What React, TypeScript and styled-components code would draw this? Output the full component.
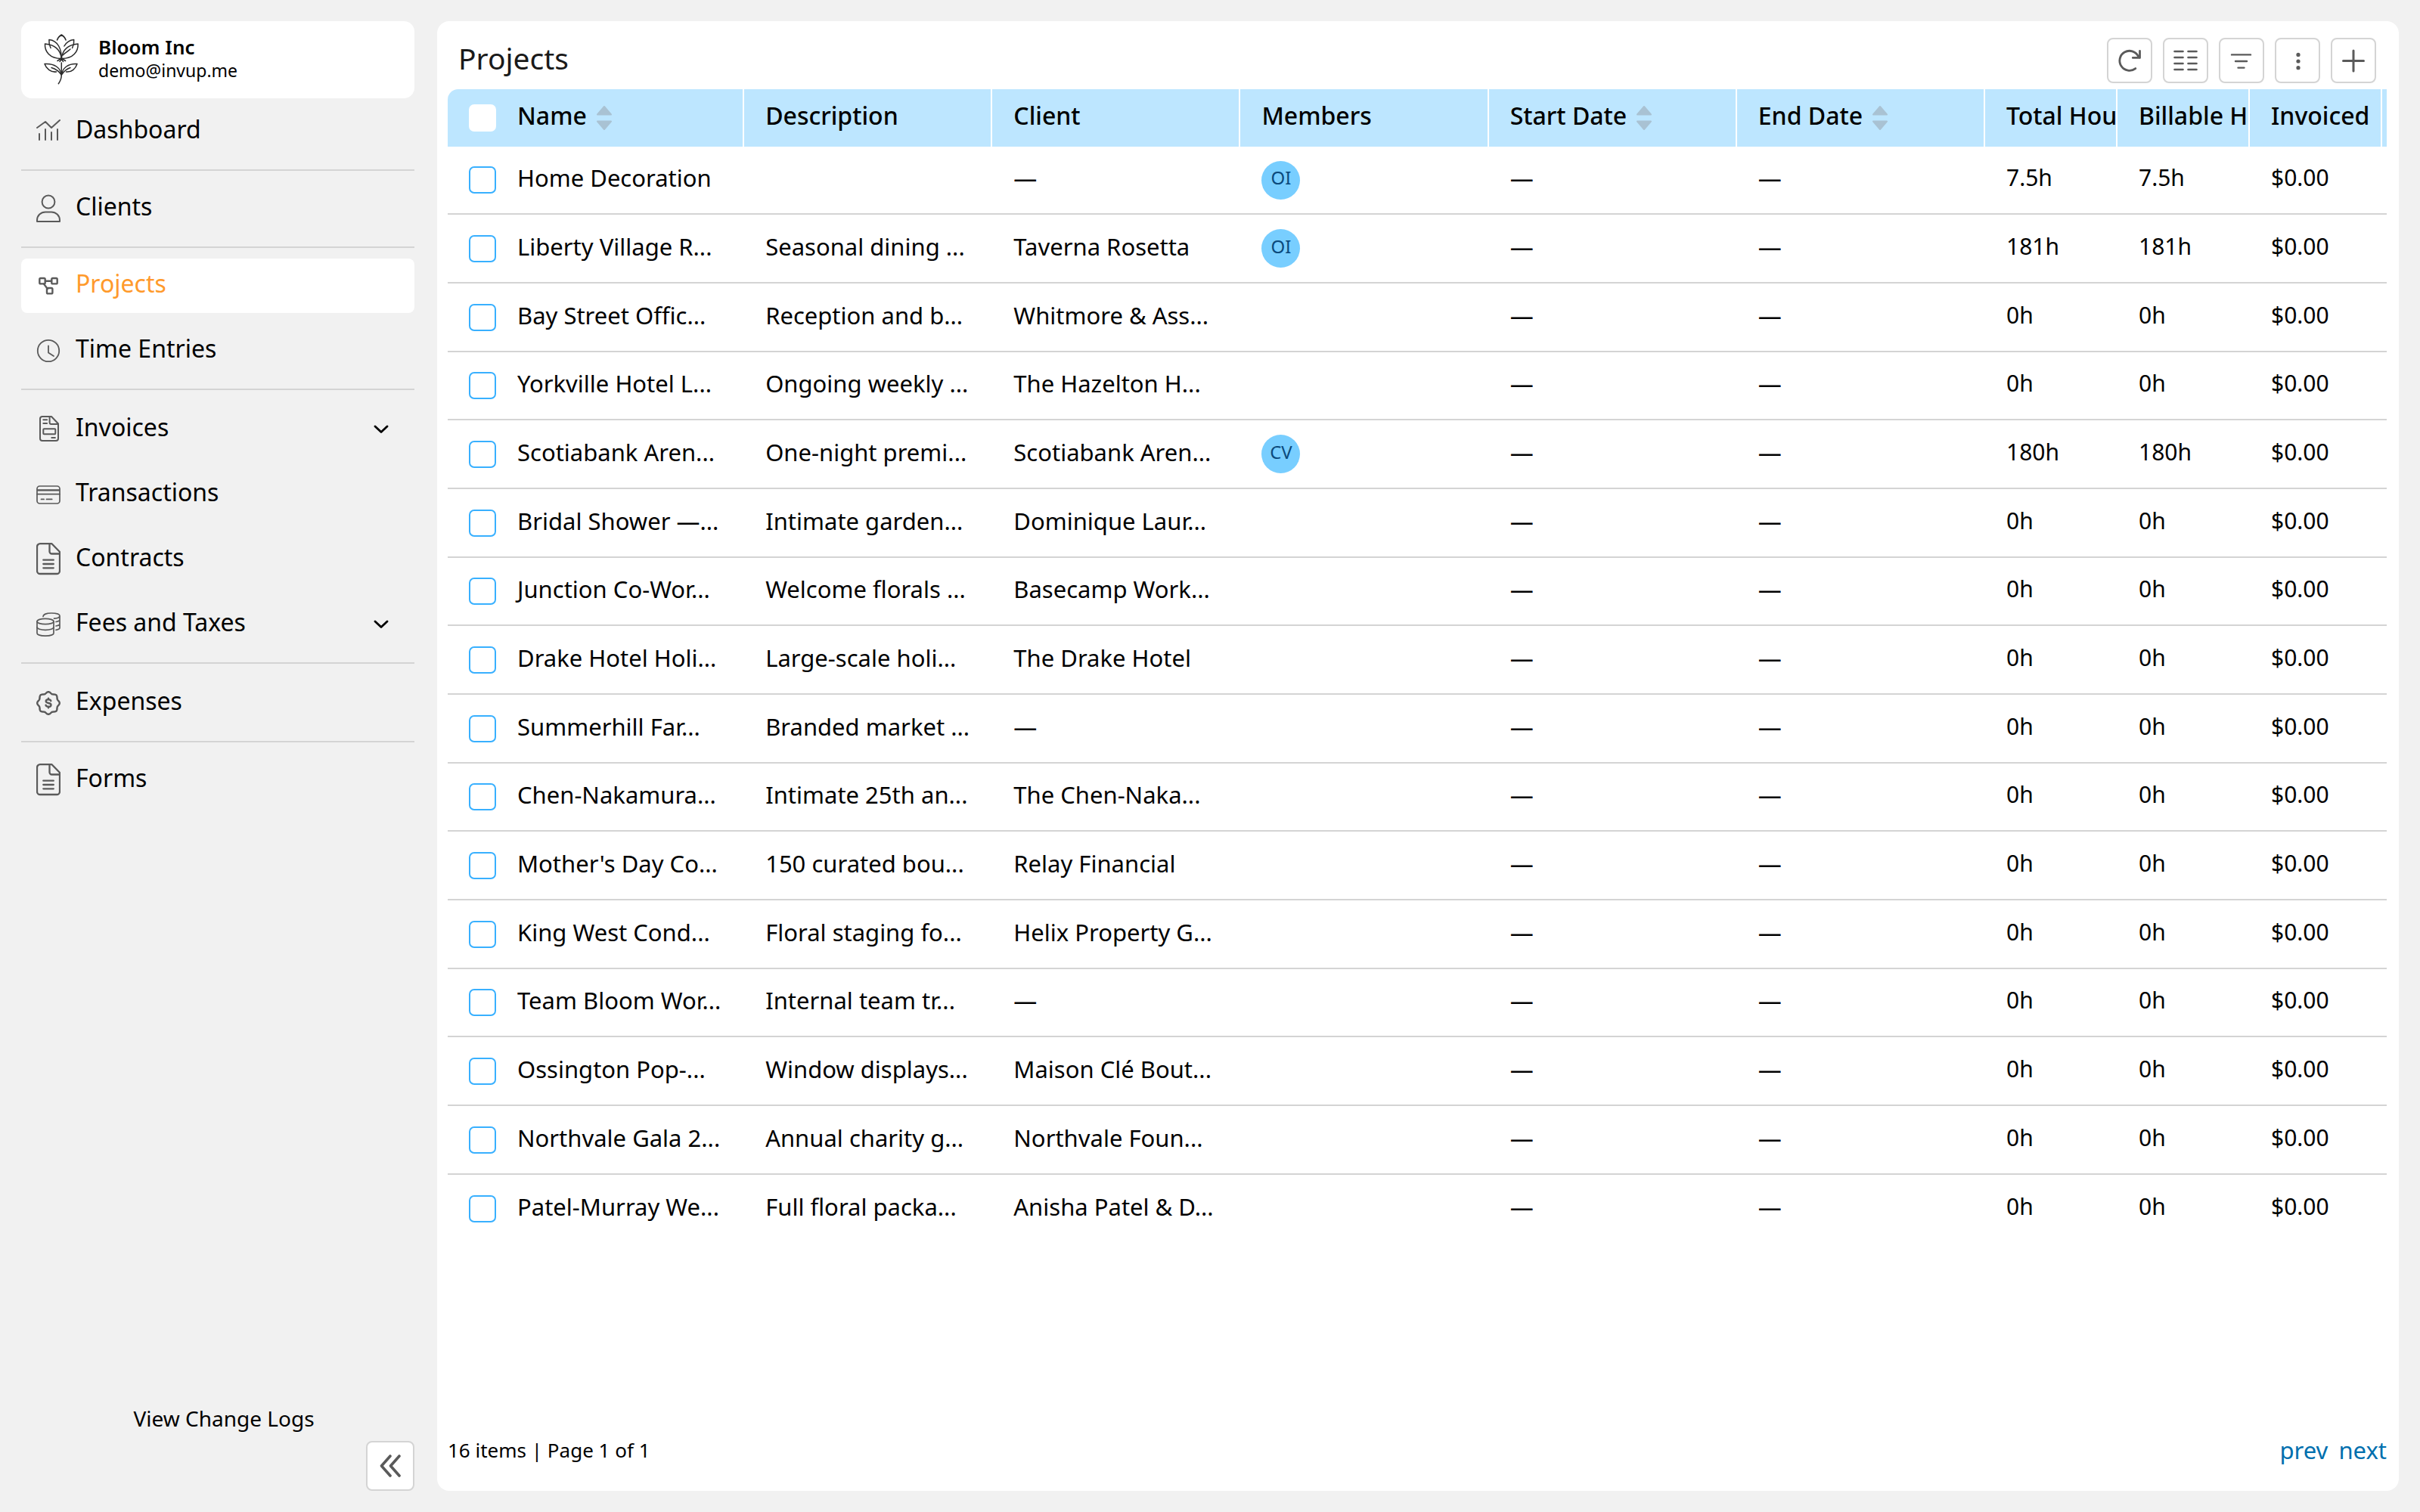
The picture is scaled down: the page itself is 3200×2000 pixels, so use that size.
import React from "react";
import styled, { createGlobalStyle, css } from "styled-components";

const color = {
  page: "#f1f1f1",
  panel: "#ffffff",
  line: "#d4d4d4",
  header: "#bde6ff",
  check: "#38b0ff",
  avatar: "#78ceff",
  avatarText: "#0b4a7c",
  accent: "#ff9a2b",
  link: "#006fae",
  icon: "#5a5a5a",
  sort: "#a9c2d3",
};

const GlobalStyle = createGlobalStyle`
  *, *::before, *::after { box-sizing: border-box; }
  body {
    margin: 0;
    background: ${color.page};
    color: #000;
    font-family: "Noto Sans", "Open Sans", sans-serif;
    font-weight: 400;
    font-size: 32px;
    line-height: 40px;
  }
  a { color: inherit; text-decoration: none; }
  button { font: inherit; color: inherit; cursor: pointer; padding: 0; }
`;

const Layout = styled.div`
  display: grid;
  grid-template-columns: 520px minmax(0, 1fr);
  gap: 30px;
  min-height: 100vh;
  padding: 28px;
`;

/* ---------- sidebar ---------- */

const Sidebar = styled.aside`
  display: flex;
  flex-direction: column;
`;

const AccountCard = styled.div`
  display: flex;
  align-items: center;
  gap: 14px;
  height: 102px;
  padding: 0 18px;
  margin-bottom: 8px;
  border-radius: 14px;
  background: ${color.panel};
`;

const AccountText = styled.div`
  display: flex;
  flex-direction: column;
  padding-bottom: 2px;
`;

const AccountName = styled.strong`
  font-size: 26px;
  line-height: 30px;
  font-weight: 600;
`;

const AccountMail = styled.span`
  font-size: 23px;
  line-height: 32px;
`;

const Nav = styled.nav`
  display: flex;
  flex-direction: column;
  gap: 14px;
`;

const navItem = css`
  display: flex;
  align-items: center;
  gap: 20px;
  width: 100%;
  height: 72px;
  padding: 0 34px 0 20px;
  border: 0;
  border-radius: 8px;
  background: transparent;
  text-align: left;
`;

const NavLink = styled.a<{ $active?: boolean }>`
  ${navItem}
  ${(p) => p.$active && `background: ${color.panel}; color: ${color.accent};`}
`;

const NavToggle = styled.button`
  ${navItem}
`;

const NavLabel = styled.span`
  flex: 1;
  padding-bottom: 6px;
`;

const Divider = styled.hr<{ $roomy?: boolean }>`
  width: 100%;
  height: 2px;
  margin: 0 0 ${(p) => (p.$roomy ? 2 : 0)}px;
  border: 0;
  background: ${color.line};
`;

const SidebarFoot = styled.div`
  display: flex;
  flex-direction: column;
  margin-top: auto;
`;

const ChangeLogs = styled.a`
  align-self: center;
  padding: 0 0 10px 16px;
  font-size: 28px;
`;

const CollapseButton = styled.button`
  align-self: flex-end;
  display: grid;
  place-items: center;
  width: 64px;
  height: 66px;
  border: 2px solid ${color.line};
  border-radius: 8px;
  background: ${color.panel};
`;

/* ---------- main panel ---------- */

const Panel = styled.main`
  display: flex;
  flex-direction: column;
  min-width: 0;
  padding: 22px 16px 34px 14px;
  border-radius: 16px;
  background: ${color.panel};
`;

const PanelHead = styled.header`
  display: flex;
  align-items: center;
  justify-content: space-between;
  padding: 0 14px 8px;
`;

const Title = styled.h1`
  margin: 0;
  padding-bottom: 6px;
  color: #1a1a1a;
  font-size: 39px;
  font-weight: 400;
  line-height: 48px;
`;

const Toolbar = styled.div`
  display: flex;
  gap: 14px;
`;

const ToolButton = styled.button`
  width: 60px;
  height: 60px;
  border: 2px solid ${color.line};
  border-radius: 8px;
  background: ${color.panel};
  svg { display: block; }
`;

const Table = styled.table`
  width: 100%;
  table-layout: fixed;
  border-collapse: separate;
  border-spacing: 0;
`;

const Col = styled.col<{ $width?: number }>`
  ${(p) => p.$width !== undefined && `width: ${p.$width}px;`}
`;

const HeadCell = styled.th<{ $divided?: boolean; $check?: boolean }>`
  height: 76px;
  padding: ${(p) => (p.$check ? "0 0 0 28px" : "0 0 6px 28px")};
  overflow: hidden;
  background: ${color.header};
  border-right: ${(p) => (p.$divided ? "2px solid #fff" : "0")};
  font-weight: 500;
  text-align: left;
  white-space: nowrap;
  &:first-child { border-top-left-radius: 14px; }
`;

const HeadLabel = styled.span`
  display: flex;
  align-items: center;
  gap: 12px;
  svg { flex: none; margin-top: 6px; }
`;

const Row = styled.tr`
  height: 91px;
  &:nth-child(3n + 1) { height: 90px; }
  &:last-child td { border-bottom: 0; }
`;

const Cell = styled.td<{ $media?: boolean; $numeric?: boolean }>`
  padding: ${(p) => (p.$media ? "0 0 0 28px" : "0 0 6px 28px")};
  overflow: hidden;
  border-bottom: 2px solid ${color.line};
  font-size: ${(p) => (p.$numeric ? 30 : 31)}px;
  white-space: nowrap;
`;

const Checkbox = styled.input<{ $plain?: boolean }>`
  display: block;
  appearance: none;
  width: 36px;
  height: 36px;
  margin: 0;
  border: 2px solid ${(p) => (p.$plain ? "#fff" : color.check)};
  border-radius: 7px;
  background: #fff;
  &:checked { background: ${color.check}; }
`;

const Avatar = styled.span`
  display: grid;
  place-items: center;
  width: 51px;
  height: 51px;
  padding-bottom: 6px;
  border-radius: 50%;
  background: ${color.avatar};
  color: ${color.avatarText};
  font-size: 24px;
`;

const PanelFoot = styled.footer`
  display: flex;
  align-items: center;
  justify-content: space-between;
  margin-top: auto;
  font-size: 26px;
`;

const Pager = styled.div`
  display: flex;
  gap: 14px;
  color: ${color.link};
  font-size: 31px;
`;

/* ---------- icons ---------- */

const NavSvg = ({ w = 2, children }: { w?: number; children: React.ReactNode }) => (
  <svg width="32" height="44" viewBox="0 -4 32 44" fill="none" stroke={color.icon}
    strokeWidth={w} strokeLinecap="round" strokeLinejoin="round" aria-hidden="true">
    {children}
  </svg>
);

const DashboardIcon = () => (
  <NavSvg>
    <path d="M1 13 12 5l8 8L31 3M4 21v8M12 15v14M20 19v10M28 15v14" />
  </NavSvg>
);
const ClientsIcon = () => (
  <NavSvg>
    <circle cx="16" cy="9" r="8.4" />
    <path d="M1 35v-1.500C1 27 6 22.400 12 22.400h8c6 0 11 4.600 11 11.100V35z" />
  </NavSvg>
);
const ProjectsIcon = () => (
  <NavSvg w={2.4}>
    <rect x="4.300" y="8" width="7.400" height="7.400" rx="1.500" />
    <rect x="20.300" y="8" width="7.400" height="7.400" rx="1.500" />
    <rect x="14" y="21" width="7.400" height="7.400" rx="1.500" />
    <path d="M12 11.700h8M10 15.600l4.800 6.400" />
  </NavSvg>
);
const ClockIcon = () => (
  <NavSvg w={1.8}>
    <circle cx="16" cy="18" r="14.200" />
    <path d="M16 11.500v9l7 4.500" />
  </NavSvg>
);
const InvoicesIcon = () => (
  <NavSvg w={2}>
    <path d="M7.500 1H20l9 9.500V30a3 3 0 0 1-3 3H8a3 3 0 0 1-3-3V4a3 3 0 0 1 2.500-3z" />
    <path d="M17.600 1.500V9a2 2 0 0 0 2 2H29M9.300 5.300h4.800M9.300 10h4.800M20.300 29h4.600" />
    <rect x="9.300" y="17.300" width="16" height="7" rx="1" />
  </NavSvg>
);
const CardIcon = () => (
  <NavSvg w={1.7}>
    <rect x="1" y="7" width="30" height="23" rx="3.500" />
    <path d="M1 17.700h30M6.500 24.400h3.600M13.500 24.400h7.200" />
    <path d="M1 12.400h30" strokeWidth="2.400" strokeLinecap="butt" />
  </NavSvg>
);
const DocIcon = () => (
  <NavSvg w={2.3}>
    <path d="M5-2.800h15.500L31 8v25a4 4 0 0 1-4 4H5a4 4 0 0 1-4-4V1.200a4 4 0 0 1 4-4z" />
    <path d="M17.500-2.500V7.500a3 3 0 0 0 3 3H31M9.300 18.700h13.500M9.300 24h13.500M9.300 29.300h13.500" />
  </NavSvg>
);
const CoinsIcon = () => (
  <NavSvg w={1.7}>
    <ellipse cx="12" cy="14" rx="11" ry="3.700" />
    <path d="M1 14v15.500c0 2.100 4.900 3.600 11 3.600s11-1.500 11-3.600V14" />
    <path d="M1 21.600c0 2.100 4.900 3.700 11 3.700s11-1.600 11-3.700" />
    <path d="M9 7.500C9 4.700 13.800 3 20 3c6.200 0 11 1.500 11 3.500S27.500 10 23.500 10.200M31 6.500v16c0 1.500-2 2.300-5 2.800M31 11.500c0 1.500-2 2.500-5 3M31 17c0 1.500-2 2.500-5 3" />
  </NavSvg>
);

const badgePath = (() => {
  const pts: string[] = [];
  for (let i = 0; i <= 120; i++) {
    const a = (i / 120) * Math.PI * 2;
    const r = 13.8 + Math.cos(8 * a);
    pts.push(`${(16 + r * Math.sin(a)).toFixed(2)} ${(18 - r * Math.cos(a)).toFixed(2)}`);
  }
  return `M${pts.join("L")}z`;
})();
const ExpensesIcon = () => (
  <NavSvg w={2.4}>
    <path d={badgePath} />
    <path d="M19.300 15.200c-.4-1.400-1.700-2-3.300-2-1.900 0-3.300.9-3.300 2.400 0 3.400 6.800 1.400 6.800 4.800 0 1.500-1.500 2.400-3.500 2.400-1.800 0-3.200-.8-3.500-2.200M16 11.800v1.400M16 22.800v1.400" />
  </NavSvg>
);

const ChevronDown = () => (
  <svg width="20" height="12" viewBox="0 0 20 12" fill="none" stroke="#000" strokeWidth="2.800"
    strokeLinecap="round" strokeLinejoin="round" aria-hidden="true">
    <path d="M2 2l8 7.500L18 2" />
  </svg>
);

const FlowerLogo = () => (
  <svg width="70" height="70" viewBox="0 0 70 70" fill="none" stroke="#2b2b2b" strokeWidth="1.500"
    strokeLinecap="round" strokeLinejoin="round" role="img" aria-label="Bloom Inc logo">
    <path d="M29.500 9C30.500 6 33 3.500 35.300 2c2.300 1.500 4.800 4 5.800 7" />
    <path d="M21 19.500c-1.800-3.500-2.500-7-2.100-11 5.500.5 10.300 4 12.800 8.500 2.500 4.500 3.600 10 3.600 16" />
    <path d="M49.600 19.500c1.800-3.500 2.500-7 2.100-11-5.500.5-10.300 4-12.800 8.500" />
    <path d="M35.300 33.500c-1-9-5.500-18-21.800-19.500-.5 10 6 19.500 21.800 19.500z" />
    <path d="M35.300 33.500c1-9 5.500-18 21.800-19.500.5 10-6 19.500-21.800 19.500z" />
    <path d="M37 29c2.500-2.500 6-4.500 10-8M30 36.500l5.300-3.500 5.300 3.500M33 37.500l2.300-3 2.300 3" />
    <path d="M35.300 39v16.300c0 4-1.500 8-4 11.400" />
    <path d="M35.300 55c-1.300-9-9-15.500-22.300-14.500 2 6 8 11.500 15.500 10.500M22 45.500c5 1.500 9.500 4 13.300 9.500" />
    <path d="M35.300 55c1.300-9 9-15.500 20.700-14.500-2 6-7 11.500-14.500 10.500M47 45.500c-4.500 1.500-8 4-11.700 9.500" />
  </svg>
);

const ToolSvg = ({ w = 2.6, children }: { w?: number; children: React.ReactNode }) => (
  <svg width="56" height="56" viewBox="2 2 56 56" fill="none" stroke={color.icon}
    strokeWidth={w} strokeLinecap="round" strokeLinejoin="round" aria-hidden="true">
    {children}
  </svg>
);

const tools: { name: string; icon: React.ReactNode }[] = [
  {
    name: "Refresh",
    icon: (
      <ToolSvg w={2.8}>
        <path d="M37.800 40.600A13 13 0 1 1 41.500 24.500L43.500 26.400M43.500 17.500v8.900h-9.200" />
      </ToolSvg>
    ),
  },
  {
    name: "Columns",
    icon: (
      <ToolSvg>
        <path d="M15.500 18h11M33.500 18h11M15.500 26h11M33.500 26h11M15.500 34h11M33.500 34h11M15.500 42h11M33.500 42h11" />
      </ToolSvg>
    ),
  },
  {
    name: "Filter",
    icon: (
      <ToolSvg w={2.4}>
        <path d="M17 22.400h25M22 31h15M25.500 39.600h8" />
      </ToolSvg>
    ),
  },
  {
    name: "More",
    icon: (
      <ToolSvg w={0}>
        <g fill={color.icon}>
          <circle cx="31" cy="22.400" r="2.600" />
          <circle cx="31" cy="31" r="2.600" />
          <circle cx="31" cy="39.700" r="2.600" />
        </g>
      </ToolSvg>
    ),
  },
  {
    name: "Add project",
    icon: (
      <ToolSvg w={3}>
        <path d="M30 17v27M16.500 30.400h27" />
      </ToolSvg>
    ),
  },
];

const SortIcon = () => (
  <svg width="22" height="34" viewBox="0 0 22 34" fill={color.sort} stroke={color.sort}
    strokeWidth="2" strokeLinejoin="round" aria-hidden="true">
    <path d="M11 2l9 10.500H2zM11 32l9-10.500H2z" />
  </svg>
);

const CollapseIcon = () => (
  <svg width="30" height="34" viewBox="0 0 30 34" fill="none" stroke={color.icon} strokeWidth="3.600"
    strokeLinecap="round" strokeLinejoin="round" aria-hidden="true">
    <path d="M15 4 3.500 17 15 30M27 4 15.500 17 27 30" />
  </svg>
);

/* ---------- data ---------- */

type NavEntry =
  | { kind: "divider"; roomy?: boolean }
  | { kind: "item"; label: string; Icon: () => React.JSX.Element; active?: boolean; expands?: boolean };

const nav: NavEntry[] = [
  { kind: "item", label: "Dashboard", Icon: DashboardIcon },
  { kind: "divider" },
  { kind: "item", label: "Clients", Icon: ClientsIcon },
  { kind: "divider" },
  { kind: "item", label: "Projects", Icon: ProjectsIcon, active: true },
  { kind: "item", label: "Time Entries", Icon: ClockIcon },
  { kind: "divider", roomy: true },
  { kind: "item", label: "Invoices", Icon: InvoicesIcon, expands: true },
  { kind: "item", label: "Transactions", Icon: CardIcon },
  { kind: "item", label: "Contracts", Icon: DocIcon },
  { kind: "item", label: "Fees and Taxes", Icon: CoinsIcon, expands: true },
  { kind: "divider", roomy: true },
  { kind: "item", label: "Expenses", Icon: ExpensesIcon },
  { kind: "divider" },
  { kind: "item", label: "Forms", Icon: DocIcon },
];

const columns: { label: string; sortable?: boolean; width?: number }[] = [
  { label: "Name", sortable: true },
  { label: "Description" },
  { label: "Client" },
  { label: "Members" },
  { label: "Start Date", sortable: true },
  { label: "End Date", sortable: true },
  { label: "Total Hours", width: 175 },
  { label: "Billable Hours", width: 175 },
  { label: "Invoiced", width: 175 },
];

type Project = { name: string; description: string; client: string; member?: string; hours: string };

const project = (name: string, description: string, client: string, hours = "0h", member?: string): Project =>
  ({ name, description, client, hours, member });

const projects: Project[] = [
  project("Home Decoration", "", "—", "7.5h", "OI"),
  project("Liberty Village R...", "Seasonal dining ...", "Taverna Rosetta", "181h", "OI"),
  project("Bay Street Offic...", "Reception and b...", "Whitmore & Ass..."),
  project("Yorkville Hotel L...", "Ongoing weekly ...", "The Hazelton H..."),
  project("Scotiabank Aren...", "One-night premi...", "Scotiabank Aren...", "180h", "CV"),
  project("Bridal Shower —...", "Intimate garden...", "Dominique Laur..."),
  project("Junction Co-Wor...", "Welcome florals ...", "Basecamp Work..."),
  project("Drake Hotel Holi...", "Large-scale holi...", "The Drake Hotel"),
  project("Summerhill Far...", "Branded market ...", "—"),
  project("Chen-Nakamura...", "Intimate 25th an...", "The Chen-Naka..."),
  project("Mother's Day Co...", "150 curated bou...", "Relay Financial"),
  project("King West Cond...", "Floral staging fo...", "Helix Property G..."),
  project("Team Bloom Wor...", "Internal team tr...", "—"),
  project("Ossington Pop-...", "Window displays...", "Maison Clé Bout..."),
  project("Northvale Gala 2...", "Annual charity g...", "Northvale Foun..."),
  project("Patel-Murray We...", "Full floral packa...", "Anisha Patel & D..."),
];

/* ---------- page ---------- */

function SideNav() {
  return (
    <Nav>
      {nav.map((entry, i) => {
        if (entry.kind === "divider") return <Divider key={i} $roomy={entry.roomy} />;
        const { Icon, label } = entry;
        return entry.expands ? (
          <NavToggle key={i} type="button" aria-expanded="false">
            <Icon />
            <NavLabel>{label}</NavLabel>
            <ChevronDown />
          </NavToggle>
        ) : (
          <NavLink key={i} href="#" $active={entry.active} aria-current={entry.active ? "page" : undefined}>
            <Icon />
            <NavLabel>{label}</NavLabel>
          </NavLink>
        );
      })}
    </Nav>
  );
}

function ProjectTable() {
  return (
    <Table>
      <colgroup>
        <Col $width={64} />
        {columns.map((c) => <Col key={c.label} $width={c.width} />)}
        <Col $width={6} />
      </colgroup>
      <thead>
        <tr>
          <HeadCell $check>
            <Checkbox type="checkbox" $plain aria-label="Select all projects" />
          </HeadCell>
          {columns.map((c) => (
            <HeadCell key={c.label} $divided scope="col">
              <HeadLabel>
                {c.label}
                {c.sortable && <SortIcon />}
              </HeadLabel>
            </HeadCell>
          ))}
          <HeadCell />
        </tr>
      </thead>
      <tbody>
        {projects.map((p) => (
          <Row key={p.name}>
            <Cell $media>
              <Checkbox type="checkbox" aria-label={`Select ${p.name}`} />
            </Cell>
            <Cell>{p.name}</Cell>
            <Cell>{p.description}</Cell>
            <Cell>{p.client}</Cell>
            <Cell $media>{p.member && <Avatar>{p.member}</Avatar>}</Cell>
            <Cell>—</Cell>
            <Cell>—</Cell>
            <Cell $numeric>{p.hours}</Cell>
            <Cell $numeric>{p.hours}</Cell>
            <Cell $numeric>$0.00</Cell>
            <Cell />
          </Row>
        ))}
      </tbody>
    </Table>
  );
}

export default function App() {
  return (
    <>
      <GlobalStyle />
      <Layout>
        <Sidebar>
          <AccountCard>
            <FlowerLogo />
            <AccountText>
              <AccountName>Bloom Inc</AccountName>
              <AccountMail>demo@invup.me</AccountMail>
            </AccountText>
          </AccountCard>
          <SideNav />
          <SidebarFoot>
            <ChangeLogs href="#">View Change Logs</ChangeLogs>
            <CollapseButton type="button" aria-label="Collapse sidebar">
              <CollapseIcon />
            </CollapseButton>
          </SidebarFoot>
        </Sidebar>
        <Panel>
          <PanelHead>
            <Title>Projects</Title>
            <Toolbar>
              {tools.map((t) => (
                <ToolButton key={t.name} type="button" aria-label={t.name}>{t.icon}</ToolButton>
              ))}
            </Toolbar>
          </PanelHead>
          <ProjectTable />
          <PanelFoot>
            <span>16 items | Page 1 of 1</span>
            <Pager>
              <a href="#">prev</a>
              <a href="#">next</a>
            </Pager>
          </PanelFoot>
        </Panel>
      </Layout>
    </>
  );
}
